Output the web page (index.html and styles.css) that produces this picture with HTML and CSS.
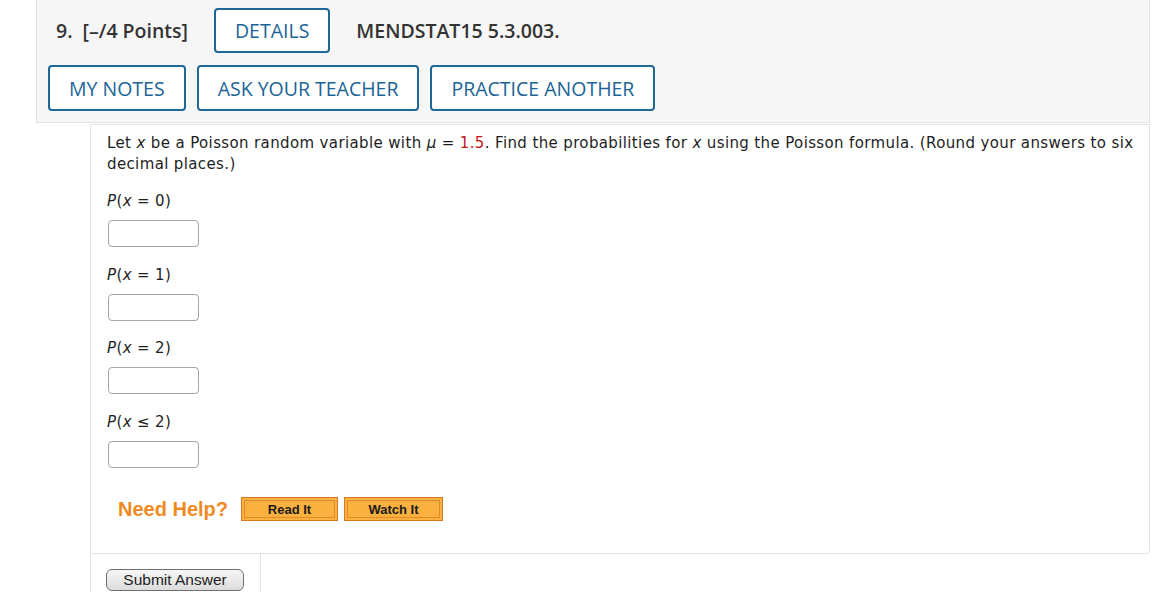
FILE: index.html
```html
<!DOCTYPE html>
<html>
<head>
<meta charset="utf-8">
<link rel="stylesheet" href="styles.css">
</head>
<body>
<div class="page">
  <div class="qhead">
    <div class="qhead-row1">
      <span class="qnum">9.&nbsp; [–/4 Points]</span>
      <button class="wa-btn details">DETAILS</button>
      <span class="qcode">MENDSTAT15 5.3.003.</span>
    </div>
    <div class="qhead-row2">
      <button class="wa-btn">MY NOTES</button>
      <button class="wa-btn">ASK YOUR TEACHER</button>
      <button class="wa-btn">PRACTICE ANOTHER</button>
    </div>
  </div>
  <div class="qbody">
    <p class="prompt">Let <i>x</i> be a Poisson random variable with <i>μ</i> = <span class="red">1.5</span>. Find the probabilities for <i>x</i> using the Poisson formula. (Round your answers to six decimal places.)</p>
    <div class="part">
      <div class="label"><i>P</i>(<i>x</i> = 0)</div>
      <input class="answer" type="text">
    </div>
    <div class="part">
      <div class="label"><i>P</i>(<i>x</i> = 1)</div>
      <input class="answer" type="text">
    </div>
    <div class="part">
      <div class="label"><i>P</i>(<i>x</i> = 2)</div>
      <input class="answer" type="text">
    </div>
    <div class="part">
      <div class="label"><i>P</i>(<i>x</i> ≤ 2)</div>
      <input class="answer" type="text">
    </div>
    <div class="help">
      <span class="need">Need Help?</span>
      <button class="orange">Read It</button>
      <button class="orange">Watch It</button>
    </div>
  </div>
  <div class="submit-cell">
    <button class="submit">Submit Answer</button>
  </div>
</div>
</body>
</html>
```

FILE: styles.css
```css
html, body {
  margin: 0;
  padding: 0;
  background: #fff;
}
.page {
  width: 1170px;
  height: 592px;
  overflow: hidden;
}
.qhead {
  margin-left: 36px;
  width: 1114px;
  margin-top: -10px;
  padding: 18px 0 11px 11px;
  box-sizing: border-box;
  background: #f6f6f6;
  border: 1px solid #e2e2e2;
  border-top: none;
  font-family: "Open Sans", sans-serif;
  color: #333;
}
.qhead-row1 {
  display: flex;
  align-items: center;
  padding-left: 8px;
  height: 45px;
}
.qnum {
  font-size: 19.5px;
  font-weight: 600;
  margin-right: 26px;
}
.qcode {
  font-size: 19.5px;
  font-weight: 600;
  margin-left: 26px;
}
.qhead-row2 {
  display: flex;
  gap: 11px;
  margin-top: 12px;
}
.wa-btn {
  height: 46px;
  padding: 0 19px;
  border: 2px solid #1f6896;
  border-radius: 4px;
  background: #fff;
  color: #1b6497;
  font-family: "Open Sans", sans-serif;
  font-size: 19.5px;
  font-weight: 500;
  letter-spacing: 0;
}
.wa-btn.details {
  height: 45px;
  padding: 0 19px;
}
.qbody {
  margin-left: 90px;
  width: 1060px;
  box-sizing: border-box;
  margin-top: 1px;
  border: 1px solid #e3e3e3;
  border-radius: 0 0 4px 0;
  padding: 8px 10px 32px 16px;
  font-family: "DejaVu Sans", Verdana, sans-serif;
  font-size: 15px;
  letter-spacing: 0.37px;
  line-height: 21px;
  color: #1e1e1e;
}
.prompt {
  margin: 0 0 16px 0;
}
.red {
  color: #c4161c;
}
.part {
  display: flex;
  flex-direction: column;
  align-items: flex-start;
}
.label {
  height: 21px;
}
.answer {
  margin: 8px 0 17.5px 1px;
  width: 91px;
  height: 27px;
  box-sizing: border-box;
  border: 1px solid #a5a5a5;
  border-radius: 4px;
  background: #fff;
  padding: 0;
}
.help {
  display: flex;
  align-items: center;
  margin-top: 12px;
  padding-left: 11px;
  height: 24px;
  letter-spacing: 0;
}
.need {
  font-family: "Liberation Sans", Arial, sans-serif;
  font-weight: 700;
  font-size: 20px;
  color: #ee8a22;
  margin-right: 13px;
}
.orange {
  height: 24px;
  width: 97px;
  margin-right: 6px;
  box-sizing: border-box;
  background: #fbb13f;
  border: 1px solid #d5781f;
  box-shadow: inset 0 0 0 2px #fbb13f, inset 0 0 0 3px #e28a26;
  font-family: "Liberation Sans", Arial, sans-serif;
  font-weight: 700;
  font-size: 13px;
  color: #1a1a1a;
  padding: 0;
}
.orange + .orange {
  width: 99px;
}
.submit-cell {
  margin-left: 90px;
  width: 171px;
  height: 60px;
  box-sizing: border-box;
  border-left: 1px solid #e3e3e3;
  border-right: 1px solid #e3e3e3;
  padding: 15px 0 0 15px;
}
.submit {
  width: 138px;
  height: 22px;
  box-sizing: border-box;
  border: 1px solid #6f6f6f;
  border-radius: 6px;
  background: linear-gradient(#f7f7f7, #dcdcdc);
  font-family: "Liberation Sans", Arial, sans-serif;
  font-size: 15.5px;
  color: #222;
  padding: 0;
  line-height: 18px;
}
```
